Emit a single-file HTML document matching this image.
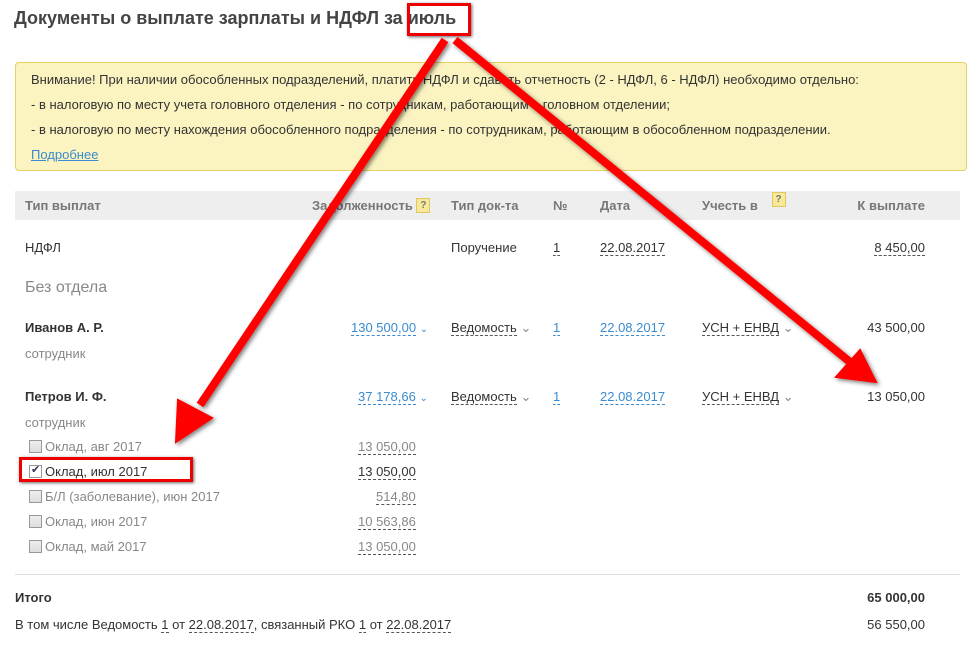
<!DOCTYPE html><html><head><meta charset="utf-8"><style>
body{margin:0;width:973px;height:653px;background:#fff;font-family:"Liberation Sans",Arial,sans-serif;font-size:13px;color:#333;position:relative;overflow:hidden}
.a{position:absolute;white-space:nowrap}
.g{color:#888}.b{font-weight:bold}
.u{border-bottom:1px dashed #555}
.bl{color:#3a8bd0;border-bottom:1px dashed #3a8bd0}
.hd{color:#777;font-weight:bold}
.q{display:inline-block;width:12px;height:13px;background:#f7e89a;border:1px solid #e0c860;font-size:10px;text-align:center;line-height:13px;color:#777;vertical-align:top}
.cb{position:absolute;width:11px;height:11px;border:1px solid #999;background:linear-gradient(#eee,#ddd)}
.ch{color:#3a8bd0;font-size:10px}
.rr{position:absolute;right:48px;white-space:nowrap}
</style></head><body>
<div class="a b" style="left:14px;top:8px;font-size:18px;color:#444">Документы о выплате зарплаты и НДФЛ за июль</div>
<div class="a" style="left:15px;top:62px;width:950px;height:107px;background:#fbf3c0;border:1px solid #ead060;border-radius:4px"></div>
<div class="a" style="left:31px;top:72px">Внимание! При наличии обособленных подразделений, платить НДФЛ и сдавать отчетность (2 - НДФЛ, 6 - НДФЛ) необходимо отдельно:</div>
<div class="a" style="left:31px;top:97px">- в налоговую по месту учета головного отделения - по сотрудникам, работающим в головном отделении;</div>
<div class="a" style="left:31px;top:122px">- в налоговую по месту нахождения обособленного подразделения - по сотрудникам, работающим в обособленном подразделении.</div>
<div class="a" style="left:31px;top:147px;color:#3a8bd0;text-decoration:underline">Подробнее</div>
<div class="a" style="left:15px;top:191px;width:945px;height:29px;background:#eee"></div>
<div class="a hd" style="left:25px;top:198px">Тип выплат</div>
<div class="a hd" style="left:312px;top:198px">Задолженность <span class="q">?</span></div>
<div class="a hd" style="left:451px;top:198px">Тип док-та</div>
<div class="a hd" style="left:553px;top:198px">№</div>
<div class="a hd" style="left:600px;top:198px">Дата</div>
<div class="a hd" style="left:702px;top:198px">Учесть в <span class="q" style="margin-left:10px;margin-top:-6px">?</span></div>
<div class="rr hd" style="top:198px">К выплате</div>
<div class="a" style="left:25px;top:240px">НДФЛ</div>
<div class="a" style="left:451px;top:240px">Поручение</div>
<div class="a u" style="left:553px;top:240px">1</div>
<div class="a u" style="left:600px;top:240px">22.08.2017</div>
<div class="rr u" style="top:240px">8 450,00</div>
<div class="a" style="left:25px;top:279px;font-size:16px;color:#888">Без отдела</div>
<div class="a b" style="left:25px;top:320px">Иванов А. Р.</div>
<div class="a g" style="left:25px;top:346px">сотрудник</div>
<div class="a" style="left:351px;top:320px"><span class="bl">130 500,00</span> <span class="ch">&#8964;</span></div>
<div class="a" style="left:451px;top:320px"><span class="u">Ведомость</span> <span class="g">&#8964;</span></div>
<div class="a bl" style="left:553px;top:320px">1</div>
<div class="a bl" style="left:600px;top:320px">22.08.2017</div>
<div class="a" style="left:702px;top:320px"><span class="u">УСН + ЕНВД</span> <span class="g">&#8964;</span></div>
<div class="rr" style="top:320px">43 500,00</div>
<div class="a b" style="left:25px;top:389px">Петров И. Ф.</div>
<div class="a g" style="left:25px;top:415px">сотрудник</div>
<div class="a" style="left:358px;top:389px"><span class="bl">37 178,66</span> <span class="ch">&#8964;</span></div>
<div class="a" style="left:451px;top:389px"><span class="u">Ведомость</span> <span class="g">&#8964;</span></div>
<div class="a bl" style="left:553px;top:389px">1</div>
<div class="a bl" style="left:600px;top:389px">22.08.2017</div>
<div class="a" style="left:702px;top:389px"><span class="u">УСН + ЕНВД</span> <span class="g">&#8964;</span></div>
<div class="rr" style="top:389px">13 050,00</div>
<div class="cb" style="left:29px;top:440px"></div><div class="a g" style="left:45px;top:439px">Оклад, авг 2017</div><div class="a g u" style="left:358px;top:439px">13 050,00</div>
<div class="cb" style="left:29px;top:465px;background:#fff"><span style="position:absolute;left:1px;top:-3px;font-size:11px;color:#335">✔</span></div><div class="a" style="left:45px;top:464px">Оклад, июл 2017</div><div class="a u" style="left:358px;top:464px">13 050,00</div>
<div class="a" style="left:19px;top:457px;width:168px;height:19px;border:3px solid #e00;box-shadow:1px 1px 3px #666"></div>
<div class="cb" style="left:29px;top:490px"></div><div class="a g" style="left:45px;top:489px">Б/Л (заболевание), июн 2017</div><div class="a g u" style="left:376px;top:489px">514,80</div>
<div class="cb" style="left:29px;top:515px"></div><div class="a g" style="left:45px;top:514px">Оклад, июн 2017</div><div class="a g u" style="left:358px;top:514px">10 563,86</div>
<div class="cb" style="left:29px;top:540px"></div><div class="a g" style="left:45px;top:539px">Оклад, май 2017</div><div class="a g u" style="left:358px;top:539px">13 050,00</div>
<div class="a" style="left:15px;top:574px;width:945px;border-top:1px solid #ddd"></div>
<div class="a b" style="left:15px;top:590px">Итого</div>
<div class="rr b" style="top:590px">65 000,00</div>
<div class="a" style="left:15px;top:617px">В том числе Ведомость <span class="u">1</span> от <span class="u">22.08.2017</span>, связанный РКО <span class="u">1</span> от <span class="u">22.08.2017</span></div>
<div class="rr" style="top:617px">56 550,00</div>
<div class="a" style="left:407px;top:3px;width:58px;height:27px;border:3px solid #e00;box-shadow:1px 1px 3px #666"></div>
<svg class="a" style="left:0;top:0" width="973" height="653">
<defs><filter id="s"><feDropShadow dx="2" dy="2" stdDeviation="2" flood-color="#000" flood-opacity=".5"/></filter></defs>
<g filter="url(#s)" fill="#f00" stroke="#f00">
<line x1="445" y1="40" x2="200" y2="405" stroke-width="8"/>
<polygon points="176,442 178,400 212,418" stroke-width="2"/>
<line x1="455" y1="40" x2="850" y2="362" stroke-width="8"/>
<polygon points="876,382 836,377 860,350" stroke-width="2"/>
</g></svg>
</body></html>
